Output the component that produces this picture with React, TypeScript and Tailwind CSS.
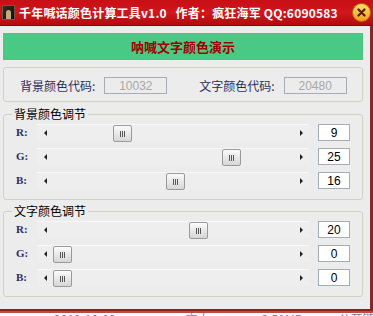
import React from "react";

type Channel = { label: string; value: string; pos: number };

const cjk = { fontFamily: '"Noto Sans CJK SC", "Liberation Sans", sans-serif' };

const bgChannels: Channel[] = [
  { label: "R", value: "9", pos: 76 },
  { label: "G", value: "25", pos: 185 },
  { label: "B", value: "16", pos: 129 },
];

const textChannels: Channel[] = [
  { label: "R", value: "20", pos: 152 },
  { label: "G", value: "0", pos: 16 },
  { label: "B", value: "0", pos: 16 },
];

const Thumb = ({ left }: { left: number }) => (
  <div
    className="absolute top-0 h-[17px] w-[19px] rounded-[2px] border border-[#9a9a9a] bg-gradient-to-b from-[#fbfbfb] to-[#d6d6d6] flex items-center justify-center gap-[1px]"
    style={{ left }}
  >
    <span className="w-[1px] h-[6px] bg-[#555]" />
    <span className="w-[1px] h-[6px] bg-[#555]" />
    <span className="w-[1px] h-[6px] bg-[#555]" />
  </div>
);

const ScrollRow = ({ ch }: { ch: Channel }) => (
  <div className="flex items-center h-[17px]">
    <span
      className="w-[33px] pl-[12px] text-[11px] font-bold text-[#2b2b66]"
      style={{ fontFamily: '"Liberation Serif", serif' }}
    >
      {ch.label}:
    </span>
    <div className="relative w-[272px] h-[17px] bg-[#eeeeee] border-t border-[#f8f8f8] flex items-center justify-between">
      <div className="w-[16px] h-full flex items-center justify-center">
        <span className="w-0 h-0 border-y-[3px] border-y-transparent border-r-[3px] border-r-[#222]" />
      </div>
      <div className="w-[16px] h-full flex items-center justify-center">
        <span className="w-0 h-0 border-y-[3px] border-y-transparent border-l-[3px] border-l-[#222]" />
      </div>
      <Thumb left={ch.pos} />
    </div>
    <div
      className="ml-[9px] w-[32px] h-[17px] bg-white border border-[#a4acb4] flex items-center justify-center text-[12px] text-black"
      style={{ fontFamily: '"Liberation Sans", sans-serif' }}
    >
      {ch.value}
    </div>
  </div>
);

const Group = ({ title, rows, className }: { title: string; rows: Channel[]; className: string }) => (
  <div className={`relative h-[86px] border border-[#d2d2c2] rounded-[3px] pt-[9px] flex flex-col gap-[7px] ${className}`}>
    <span className="absolute -top-[10px] left-[8px] px-[2px] bg-[#ececec] text-[12px] leading-[18px] text-black" style={cjk}>
      {title}
    </span>
    {rows.map((ch) => (
      <ScrollRow key={ch.label} ch={ch} />
    ))}
  </div>
);

export default function App() {
  return (
    <div className="w-[373px] h-[316px] overflow-hidden bg-white flex flex-col">
      {/* Title bar */}
      <div className="h-[26px] bg-gradient-to-b from-[#c70f16] via-[#d2161c] to-[#b10b0f] border-b border-[#7c0a0a] flex items-center pl-[2px] pr-[2px]">
        <div className="w-[13px] h-[15px] bg-gradient-to-br from-[#3a3020] to-[#0c0c0c] border border-[#6a5a40] flex items-end justify-center">
          <span className="w-[5px] h-[9px] rounded-t-full bg-[#c8a878]" />
        </div>
        <span className="ml-[4px] text-[12px] font-bold text-white whitespace-nowrap tracking-[0.2px]" style={cjk}>
          千年喊话颜色计算工具v1.0&nbsp;&nbsp;&nbsp;作者：疯狂海军 QQ:6090583
        </span>
        <div className="ml-auto w-[19px] h-[19px] rounded-full bg-gradient-to-b from-[#ffe060] to-[#f0a018] border border-[#b87010] flex items-center justify-center">
          <svg width="9" height="9" viewBox="0 0 9 9">
            <path d="M1.5 1.5L7.5 7.5M7.5 1.5L1.5 7.5" stroke="#5a1a08" strokeWidth="2.2" strokeLinecap="round" />
          </svg>
        </div>
      </div>

      {/* Body */}
      <div className="flex-1 bg-[#ececec] border-r-[3px] border-r-[#8a2626] pl-[3px] pr-[7px] pt-[7px] flex flex-col">
        <div className="h-[27px] bg-[#4ac985] flex items-center justify-center">
          <span className="text-[13px] font-bold text-[#a00000]" style={cjk}>
            呐喊文字颜色演示
          </span>
        </div>

        <div className="mt-[7px] h-[35px] border border-[#d2d2c2] rounded-[3px] flex items-center pl-[16px] pt-[2px] text-[12px] text-[#2d2d5c]" style={cjk}>
          <span>背景颜色代码:</span>
          <div className="ml-[9px] w-[63px] h-[17px] border border-[#a6adb6] flex items-center justify-center text-[#a8a8a8]" style={{ fontFamily: '"Liberation Sans", sans-serif' }}>
            10032
          </div>
          <span className="ml-[32px]">文字颜色代码:</span>
          <div className="ml-[9px] w-[63px] h-[17px] border border-[#a6adb6] flex items-center justify-center text-[#a8a8a8]" style={{ fontFamily: '"Liberation Sans", sans-serif' }}>
            20480
          </div>
        </div>

        <Group title="背景颜色调节" rows={bgChannels} className="mt-[12px]" />
        <Group title="文字颜色调节" rows={textChannels} className="mt-[11px]" />
      </div>

      {/* Window bottom edge */}
      <div className="h-[2px] bg-[#8a2020]" />
      <div className="h-[2px] bg-[#c04848]" />
      <div className="h-[3px] overflow-hidden relative bg-white">
        <div className="absolute top-[-1px] left-0 flex text-[12px] leading-[14px] text-[#888] whitespace-nowrap" style={cjk}>
          <span className="ml-[54px]">2019-10-09</span>
          <span className="ml-[70px]">文本</span>
          <span className="ml-[52px]">2.59MB</span>
          <span className="ml-[36px]">公开链</span>
          <span className="ml-[30px]">状态</span>
        </div>
      </div>
    </div>
  );
}
